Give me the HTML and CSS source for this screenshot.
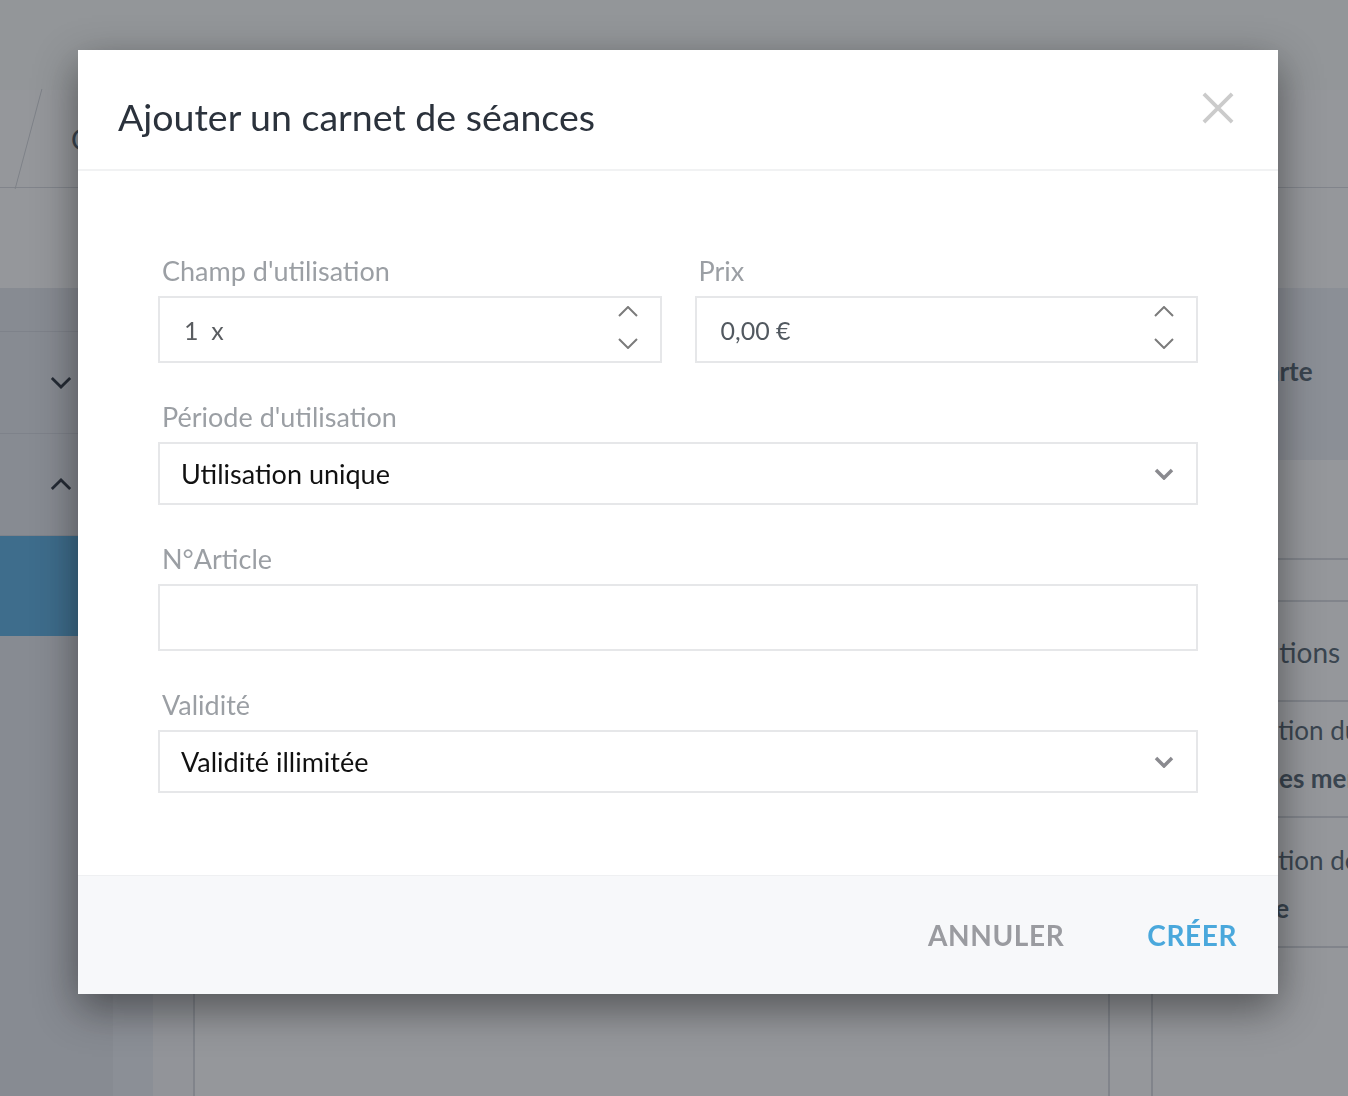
FILE: index.html
```html
<!DOCTYPE html>
<html lang="fr">
<head>
    <meta charset="UTF-8">
    <meta name="viewport" content="width=device-width, initial-scale=1.0">
    <title>Ajouter un carnet de séances</title>
    <link rel="stylesheet" href="styles.css">
</head>
<body>
    <div class="app">
        <header class="topbar"></header>
        <div class="subbar">
            <span class="crumb-sep"></span>
            <span class="crumb">Carnets</span>
        </div>
        <div class="toolbar"></div>
        <div class="main">
            <aside class="sidebar">
                <div class="side-row short"></div>
                <div class="side-row">
                    <svg class="side-chev" viewBox="0 0 24 14"><path d="M2 2l10 10 10-10"/></svg>
                </div>
                <div class="side-row">
                    <svg class="side-chev" viewBox="0 0 24 14"><path d="M2 12l10-10 10 10"/></svg>
                </div>
                <div class="side-row active"></div>
            </aside>
            <div class="rail"></div>
            <div class="rail light"></div>
            <section class="content"></section>
            <div class="gutter"></div>
            <section class="panel">
                <div class="panel-head">Carte</div>
                <div class="panel-blank"></div>
                <div class="panel-sep"></div>
                <div class="panel-row big">Conditions</div>
                <div class="panel-row">
                    <span>Utilisation du</span>
                    <b>Tarif des membres</b>
                </div>
                <div class="panel-row tall">
                    <span>Utilisation de</span>
                    <b>Séance</b>
                </div>
            </section>
        </div>
    </div>

    <div class="backdrop"></div>

    <div class="modal">
        <div class="modal-header">
            <h1>Ajouter un carnet de séances</h1>
            <button class="close" aria-label="Fermer">
                <svg viewBox="0 0 34 34"><path d="M2 2l30 30M32 2L2 32"/></svg>
            </button>
        </div>

        <div class="modal-body">
            <div class="row two">
                <div class="field">
                    <label>Champ d'utilisation</label>
                    <div class="input number">
                        <span class="value">1&nbsp; x</span>
                        <span class="spinner">
                            <svg viewBox="0 0 20 11"><path d="M1 10l9-9 9 9"/></svg>
                            <svg viewBox="0 0 20 11"><path d="M1 1l9 9 9-9"/></svg>
                        </span>
                    </div>
                </div>
                <div class="field">
                    <label>Prix</label>
                    <div class="input number">
                        <span class="value price">0,00 €</span>
                        <span class="spinner">
                            <svg viewBox="0 0 20 11"><path d="M1 10l9-9 9 9"/></svg>
                            <svg viewBox="0 0 20 11"><path d="M1 1l9 9 9-9"/></svg>
                        </span>
                    </div>
                </div>
            </div>

            <div class="field">
                <label>Période d'utilisation</label>
                <div class="input select">
                    <span class="value">Utilisation unique</span>
                    <svg class="caret" viewBox="0 0 20 12"><path d="M2 2l8 8 8-8"/></svg>
                </div>
            </div>

            <div class="field">
                <label>N°Article</label>
                <div class="input"></div>
            </div>

            <div class="field">
                <label>Validité</label>
                <div class="input select">
                    <span class="value">Validité illimitée</span>
                    <svg class="caret" viewBox="0 0 20 12"><path d="M2 2l8 8 8-8"/></svg>
                </div>
            </div>
        </div>

        <div class="modal-footer">
            <button class="btn cancel">Annuler</button>
            <button class="btn primary">Créer</button>
        </div>
    </div>
</body>
</html>
```

FILE: styles.css
```css
body {
    margin: 0;
    height: 1096px;
    overflow: hidden;
    font-family: Lato, "Open Sans", sans-serif;
    background: #fbfcfc;
}

.app {
    display: flex;
    flex-direction: column;
    height: 100%;
}

.topbar {
    height: 90px;
    background: #fbfcfb;
}

.subbar {
    height: 97px;
    background: #ffffff;
    border-bottom: 1px solid #d6d9de;
    display: flex;
    align-items: center;
}

.crumb-sep {
    width: 1px;
    height: 100px;
    background: #d0d3d8;
    margin-left: 28px;
    transform: skewX(-15deg);
}

.crumb {
    margin-left: 42px;
    font-size: 28px;
    color: #495a68;
}

.toolbar {
    height: 100px;
    background: #ffffff;
}

.main {
    flex: 1;
    display: flex;
}

.sidebar {
    flex: 0 0 113px;
    background: #e3e6ec;
}

.side-row {
    height: 101px;
    border-bottom: 1px solid #d1d4dc;
    display: flex;
    align-items: center;
}

.side-row.short {
    height: 43px;
}

.side-row.active {
    height: 100px;
    background: #51aae0;
    border-bottom: none;
}

.side-chev {
    width: 22px;
    height: 13px;
    margin-left: 50px;
    fill: none;
    stroke: #1f2733;
    stroke-width: 3;
}

.rail {
    flex: 0 0 40px;
    background: #ebeef4;
}

.rail.light {
    flex-basis: 40px;
    background: #f8f9fb;
    border-right: 2px solid #d6d9de;
}

.content {
    flex: 0 0 913px;
    background: #ffffff;
    border-right: 2px solid #d6d9de;
}

.gutter {
    flex: 0 0 41px;
    background: #ffffff;
    border-right: 2px solid #d6d9de;
}

.panel {
    flex: 1;
    min-width: 0;
    overflow: hidden;
    background: #ffffff;
    color: #495a68;
}

.panel-head {
    height: 172px;
    background: #ebeef4;
    font-size: 26px;
    font-weight: 700;
    line-height: 166px;
    padding-left: 96px;
}

.panel-blank {
    height: 98px;
    border-bottom: 2px solid #d6d9de;
}

.panel-sep {
    height: 40px;
    border-bottom: 2px solid #d6d9de;
}

.panel-row {
    display: flex;
    flex-direction: column;
    gap: 16px;
    padding: 12px 0 22px 54px;
    font-size: 26px;
    line-height: 32px;
    white-space: nowrap;
    border-bottom: 2px solid #d6d9de;
}

.panel-row.tall {
    padding-top: 26px;
}

.panel-row.big {
    height: 100px;
    box-sizing: border-box;
    padding-top: 34px;
    font-size: 28px;
}

/* dialog */

.backdrop {
    position: fixed;
    inset: 0;
    background: rgba(43, 48, 56, 0.5);
}

.modal {
    position: fixed;
    top: 50px;
    left: 78px;
    width: 1200px;
    background: #ffffff;
    box-shadow: 0 14px 40px rgba(0, 0, 0, 0.45);
}

.modal-header {
    height: 119px;
    border-bottom: 2px solid #f1f2f3;
    display: flex;
    align-items: center;
    justify-content: space-between;
    padding: 0 44px 0 40px;
}

.modal-header h1 {
    margin: 14px 0 0;
    font-size: 37.5px;
    font-weight: 400;
    color: #2b323c;
}

.close {
    border: none;
    background: none;
    padding: 0;
    width: 32px;
    height: 32px;
    margin-top: -4px;
    cursor: pointer;
}

.close svg {
    display: block;
    width: 32px;
    height: 32px;
    stroke: #cbcbcb;
    stroke-width: 4;
}

.modal-body {
    padding: 85px 80px 82px;
    display: flex;
    flex-direction: column;
    gap: 39px;
}

.row.two {
    display: grid;
    grid-template-columns: 1fr 1fr;
    gap: 33px;
}

.field label {
    display: block;
    margin: 0 0 10px 4px;
    font-size: 27px;
    line-height: 30px;
    color: #9b9fa4;
}

.input {
    height: 67px;
    border: 2px solid #e6e7e9;
    box-sizing: border-box;
    display: flex;
    align-items: center;
    padding: 0 24px;
}

.input.select {
    height: 63px;
    padding: 0 22px 0 21px;
    justify-content: space-between;
}

.value {
    font-size: 25px;
    color: #5a5d61;
}

.value.price {
    color: #525960;
}

.select .value {
    font-size: 27px;
    color: #111111;
}

.number {
    justify-content: space-between;
    padding-right: 22px;
}

.spinner {
    display: flex;
    flex-direction: column;
    gap: 21px;
    margin-top: -4px;
}

.spinner svg {
    display: block;
    width: 20px;
    height: 11px;
    fill: none;
    stroke: #7b7b7b;
    stroke-width: 2;
}

.caret {
    width: 20px;
    height: 12px;
    fill: none;
    stroke: #8a8a8f;
    stroke-width: 3.5;
}

.modal-footer {
    height: 118px;
    background: #f7f8fa;
    border-top: 1px solid #eff0f2;
    display: flex;
    align-items: center;
    justify-content: flex-end;
    gap: 83px;
    padding-right: 41px;
}

.btn {
    border: none;
    background: none;
    padding: 0;
    font-family: inherit;
    font-size: 28px;
    font-weight: 700;
    letter-spacing: 0.6px;
    text-transform: uppercase;
    cursor: pointer;
}

.btn.cancel {
    color: #9a9ba0;
}

.btn.primary {
    color: #4aa8dc;
}
```
